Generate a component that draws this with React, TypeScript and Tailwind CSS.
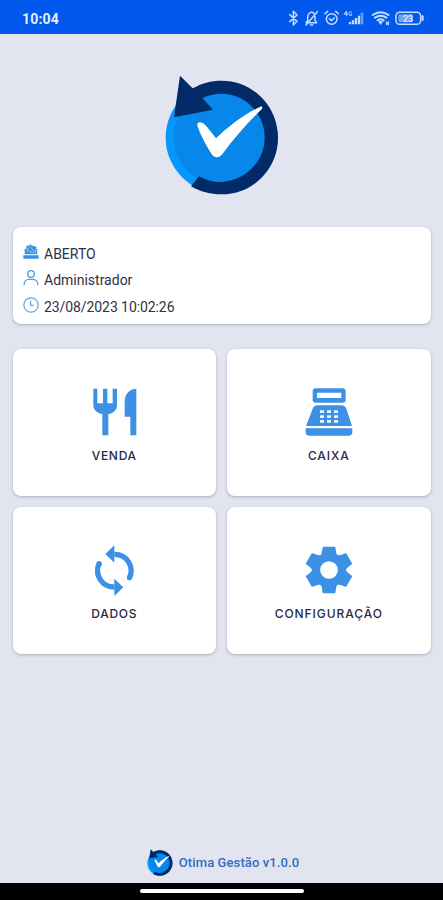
import React from "react";

function Logo({ className }: { className: string }) {
  return (
    <svg viewBox="30 28 342 362" className={className} aria-hidden="true">
      <circle cx="200" cy="216" r="168" fill="#0597fb" />
      <circle cx="196" cy="216" r="140" fill="#0787ea" />
      <path
        d="M108 362 L132 332 C158 346 180 350 200 349 C270 345 329 288 329 216 C329 142 270 84 200 84 C178 84 160 89 142 97 L174 132 L57 155 L75 30 L113 68 C140 53 168 45 200 45 C294 45 369 122 369 216 C369 310 294 386 200 386 C166 386 136 378 108 362 Z"
        fill="#022a66"
      />
      <path
        d="M128 172 C137 165 149 174 157 185 L183 218 C223 180 266 147 316 123 C322 121 324 126 320 131 C279 170 239 216 203 264 C192 278 178 278 169 264 C151 235 136 207 127 180 Z"
        fill="#fff"
      />
    </svg>
  );
}

function StatusIcons() {
  return (
    <svg viewBox="50 28 416 56" className="h-[18.67px] w-[138.67px]" fill="none" stroke="#c3dcff" strokeWidth="4.5" strokeLinejoin="round" strokeLinecap="round" aria-hidden="true">
      <path d="M58 45 L80 65 L69 76 V35 L80 46 L58 66" />
      <path d="M107 69 H139 L134 62 V49 C134 40 126 36 119 39 C114 42 112 47 112 53 V63 Z M120 76 H127 M107 76 L141 36" />
      <circle cx="184" cy="58" r="16" />
      <path d="M164 42 L172 35 M196 35 L204 42 M177 57 L183 63 L192 55" />
      <path d="M222 43 H231 M228 35 L222 43 M229 35 V48 M243 37 H238 L235 41 L238 47 H243 V43" strokeWidth="3" />
      <path d="M239 67 V74 M248 62 V74 M257 55 V74 M266 48 V74" strokeWidth="7" strokeLinecap="butt" />
      <path d="M275 39 V74" stroke="#6a9cf5" strokeWidth="8" strokeLinecap="butt" />
      <path d="M307 46 Q331 29 355 46 M314 54 Q331 42 348 54 M322 62 Q331 56 340 62" strokeWidth="6" />
      <path d="M327 66 L331 73 L335 66 Z M349 68 V74 M354 67 V75" />
      <rect x="377" y="38" width="74" height="36" rx="11" />
      <rect x="384" y="44" width="44" height="24" rx="4" fill="#6ba2f5" stroke="none" />
      <path d="M457 50 V61" strokeWidth="6" />
      <text x="398" y="66" fill="#e2efff" stroke="none" fontFamily="Roboto, sans-serif" fontWeight="500" fontSize="27">23</text>
    </svg>
  );
}

function StoreIcon() {
  return (
    <svg viewBox="0 0 48 45" className="h-[15px] w-4" fill="#3d92df" aria-hidden="true">
      <path d="M1 34 H47 V44 H1 Z M5 31 V15 H10 V5 H18 L22 1 L28 5 L40 8 V15 H43 V31 Z" />
      <path d="M15 11 V24 M22 9 L33 20 M23 20 V27 M31 22 V28 M38 16 V28" stroke="#d8edff" strokeWidth="2" />
    </svg>
  );
}

function PersonIcon() {
  return (
    <svg viewBox="0 0 48 48" className="size-4" fill="none" stroke="#4a9ee4" strokeWidth="4" aria-hidden="true">
      <circle cx="24" cy="12" r="10" />
      <path d="M3 46 C3 33 11 28 18 28 H30 C37 28 45 33 45 46" />
    </svg>
  );
}

function ClockIcon() {
  return (
    <svg viewBox="0 0 48 48" className="size-4" fill="none" stroke="#58a7e7" strokeWidth="3.5" aria-hidden="true">
      <circle cx="24" cy="24" r="21.5" />
      <path d="M23 11 V25 H32" />
    </svg>
  );
}

function CutleryIcon() {
  return (
    <svg viewBox="0 0 132 144" className="ml-px h-12 w-11" fill="#3c91e6" aria-hidden="true">
      <path d="M1 2 H13 V46 H30 V2 H43 V46 H59 V2 H72 V51 C72 66 62 76 46 78 V142 H28 V78 C12 76 1 66 1 51 Z" />
      <path d="M130 2 C110 2 95 18 95 42 V86 H112 V142 H130 Z" />
    </svg>
  );
}

function RegisterIcon() {
  return (
    <svg viewBox="0 0 144 144" className="ml-px size-12" aria-hidden="true">
      <path fillRule="evenodd" d="M32 1 H113 Q122 1 122 10 V35 Q122 44 113 44 H32 Q23 44 23 35 V10 Q23 1 32 1 Z M36 14 V30 H109 V14 Z" fill="#3c91e6" />
      <path d="M38 52 H108 C118 52 123 57 125 65 L141 114 H3 L22 65 C24 57 29 52 38 52 Z" fill="#3c91e6" />
      <path d="M2 121 H142 V132 Q142 143 131 143 H13 Q2 143 2 132 Z" fill="#3c91e6" />
      <path d="M45 71 H57 M66 71 H78 M87 71 H99 M45 86 H57 M66 86 H78 M87 86 H99 M45 100 H57 M66 100 H78 M87 100 H99" stroke="#eaf5ff" strokeWidth="8" />
    </svg>
  );
}

function SyncIcon() {
  return (
    <svg viewBox="46 28 116 154" className="h-[51.33px] w-[38.67px]" aria-hidden="true">
      <path d="M104 56 A49 49 0 0 1 149 127 M104 154 A49 49 0 0 1 59 83" fill="none" stroke="#3c91e6" strokeWidth="16" />
      <path d="M104 29 V81 L77 55 Z M104 129 V181 L131 155 Z" fill="#3c91e6" />
      <circle cx="149.500" cy="126" r="8" fill="#3c91e6" />
      <circle cx="58.500" cy="84" r="8" fill="#3c91e6" />
    </svg>
  );
}

function GearIcon() {
  return (
    <svg viewBox="-72 -72 144 144" className="ml-px size-12" fill="#3c91e6" aria-hidden="true">
      <circle r="39" fill="none" stroke="#3c91e6" strokeWidth="25" />
      {[0, 60, 120, 180, 240, 300].map((angle) => (
        <path key={angle} transform={`rotate(${angle})`} d="M-26 -43 L-22 -50 L-19 -68 Q-18.500 -70 -16 -70 H16 Q18.500 -70 19 -68 L22 -50 L26 -43 Z" />
      ))}
    </svg>
  );
}

function Tile({ label, labelClass, children }: { label: string; labelClass: string; children: React.ReactNode }) {
  return (
    <button className="flex h-[147px] flex-col items-center rounded-lg bg-white pt-[34px] shadow-[0_1px_3px_rgba(60,65,90,0.35)]">
      <span className="flex h-[58px] items-center justify-center">{children}</span>
      <span className={`mt-[7px] whitespace-nowrap font-['Inter',sans-serif] text-xs font-medium leading-4 text-[#282848] ${labelClass}`}>{label}</span>
    </button>
  );
}

export default function App() {
  return (
    <div className="flex h-[900px] w-[443px] flex-col overflow-hidden bg-[#e2e5ef] font-['Roboto',sans-serif]">
      <header className="flex h-[34px] shrink-0 items-start justify-between bg-[#0058ec] pl-[22px] pr-[17.67px] pt-[9.33px]">
        <span className="pt-px text-sm font-bold leading-[19px] tracking-[0.2px] text-[#e4efff]">10:04</span>
        <StatusIcons />
      </header>
      <main className="flex flex-1 flex-col px-[12.5px]">
        <div className="flex h-[193.25px] shrink-0 justify-center pt-[40.5px]">
          <Logo className="h-[120.67px] w-[114px]" />
        </div>
        <section className="flex h-[97px] shrink-0 flex-col rounded-lg bg-white pl-[10.5px] pt-[13px] text-sm text-[#303044] shadow-[0_1px_3px_rgba(60,65,90,0.35)]">
          <div className="flex h-[26.5px] items-center gap-[5px]"><span className="-mt-1"><StoreIcon /></span><span>ABERTO</span></div>
          <div className="flex h-[26.5px] items-center gap-[5px]"><span className="-mt-1"><PersonIcon /></span><span>Administrador</span></div>
          <div className="flex h-[26.5px] items-center gap-[5px]"><span className="-mt-1"><ClockIcon /></span><span className="tracking-[-0.08px]">23/08/2023 10:02:26</span></div>
        </section>
        <nav className="mt-[25px] grid grid-cols-2 gap-[11px]">
          <Tile label="VENDA" labelClass="tracking-[0.7px]"><CutleryIcon /></Tile>
          <Tile label="CAIXA" labelClass="tracking-[0.9px]"><RegisterIcon /></Tile>
          <Tile label="DADOS" labelClass="tracking-[0.75px]"><SyncIcon /></Tile>
          <Tile label="CONFIGURAÇÃO" labelClass="tracking-[0.93px]"><GearIcon /></Tile>
        </nav>
      </main>
      <footer className="flex h-[34px] shrink-0 items-start justify-center gap-[6px] pl-[3px]">
        <Logo className="h-[27px] w-[26px]" />
        <span className="pt-[5px] text-[13px] font-medium leading-[18px] tracking-[0.1px] text-[#356bc0]">Otima Gestão v1.0.0</span>
      </footer>
      <div className="flex h-[17.5px] shrink-0 justify-center bg-black pt-[6.5px]">
        <div className="h-1 w-[164px] rounded-full bg-white" />
      </div>
    </div>
  );
}
